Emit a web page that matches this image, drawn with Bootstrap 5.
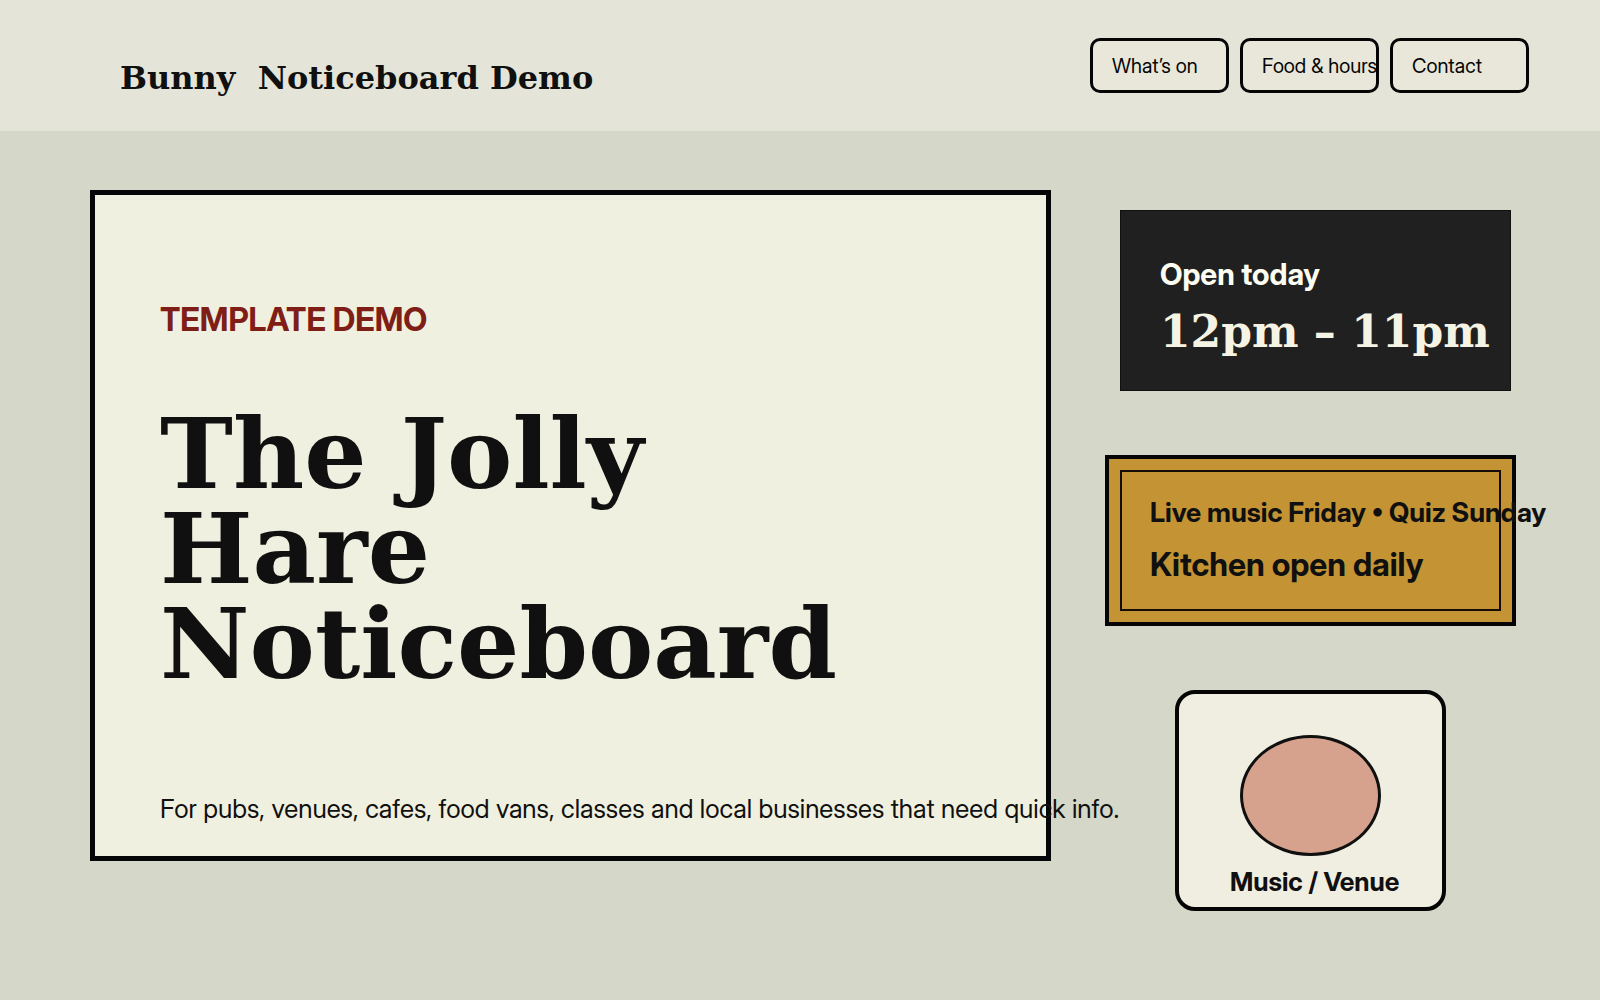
<!DOCTYPE html>
<html lang="en">
<head>
<meta charset="utf-8">
<meta name="viewport" content="width=device-width, initial-scale=1">
<title>The Jolly Hare Noticeboard</title>
<link href="https://cdn.jsdelivr.net/npm/bootstrap@5.3.0/dist/css/bootstrap.min.css" rel="stylesheet">
<style>
  body { background: #d5d7c8; color: #101010; font-family: "Inter Display", Inter, "Liberation Sans", sans-serif; font-variation-settings: "opsz" 32; }
  .serif { font-family: "DejaVu Serif", "Liberation Serif", serif; font-weight: 700; }
  .site-head { background: #e4e4d8; padding: 38px 71px 33px 120px; }
  .site-brand { font-size: 32px; line-height: 40px; margin-top: 20px; white-space: pre; color: #101010; text-decoration: none; }
  .site-links { gap: 11px; }
  .site-link { width: 139px; padding: 11px 19px 9px; border: 3px solid #050505; border-radius: 10px; background: #e8e7da; color: #050505; font-size: 20px; line-height: 29px; font-variation-settings: "opsz" 26; white-space: nowrap; text-decoration: none; }
  .board { padding: 59px 84px 59px 90px; gap: 54px; }
  .hero { border: 5px solid #050608; background: #f0f0e0; padding: 105px 65px 31px; min-width: 0; white-space: nowrap; }
  .eyebrow { color: #7f1d17; font-size: 32px; line-height: 40px; font-weight: 700; margin-bottom: 66px; }
  .hero h1 { font-size: 98px; line-height: 95px; margin-bottom: 102px; }
  .hero-note { font-size: 26px; line-height: 32px; }
  .side { width: 411px; gap: 64px; white-space: nowrap; }
  .hours { background: #202020; color: #fdfdf2; border: 1px solid #101010; margin: 20px 5px 0 15px; padding: 45px 39px 30px; }
  .hours h2 { font-size: 30px; line-height: 36px; font-weight: 700; margin-bottom: 12px; }
  .hours-time { font-size: 44px; line-height: 56px; color: #f5f3e4; }
  .events { background: #c49434; border: 4px solid #050505; padding: 11px; }
  .events-inner { border: 2px solid #150d05; padding: 25px 28px 24px; }
  .events-line { font-size: 27px; line-height: 32px; font-weight: 700; margin-bottom: 16px; }
  .events-main { font-size: 32px; line-height: 40px; font-weight: 700; }
  .venue { width: 271px; background: #f0eee1; border: 4px solid #050505; border-radius: 20px; padding: 41px 0 9px; }
  .venue-art { width: 141px; height: 121px; border: 3px solid #101010; border-radius: 50%; background: #d6a28d; }
  .venue h2 { font-size: 26px; line-height: 32px; font-weight: 700; margin: 10px 0 0 51px; }
</style>
</head>
<body>
<header class="site-head d-flex flex-wrap justify-content-between align-items-start">
  <a class="site-brand serif" href="#">Bunny  Noticeboard Demo</a>
  <nav class="site-links d-flex" aria-label="Main">
    <a class="site-link" href="#events">What’s on</a>
    <a class="site-link" href="#hours">Food &amp; hours</a>
    <a class="site-link" href="#venue">Contact</a>
  </nav>
</header>
<main class="board d-flex align-items-start">
  <section class="hero flex-grow-1">
    <p class="eyebrow">TEMPLATE DEMO</p>
    <h1 class="serif">The Jolly<br>Hare<br>Noticeboard</h1>
    <p class="hero-note mb-0">For pubs, venues, cafes, food vans, classes and local businesses that need quick info.</p>
  </section>
  <aside class="side d-flex flex-column flex-shrink-0">
    <section class="hours" id="hours">
      <h2>Open today</h2>
      <p class="hours-time serif mb-0">12pm – 11pm</p>
    </section>
    <section class="events" id="events">
      <div class="events-inner">
        <p class="events-line">Live music Friday • Quiz Sunday</p>
        <p class="events-main mb-0">Kitchen open daily</p>
      </div>
    </section>
    <section class="venue mx-auto" id="venue">
      <div class="venue-art mx-auto"></div>
      <h2>Music / Venue</h2>
    </section>
  </aside>
</main>
<script src="https://cdn.jsdelivr.net/npm/bootstrap@5.3.0/dist/js/bootstrap.bundle.min.js"></script>
</body>
</html>
